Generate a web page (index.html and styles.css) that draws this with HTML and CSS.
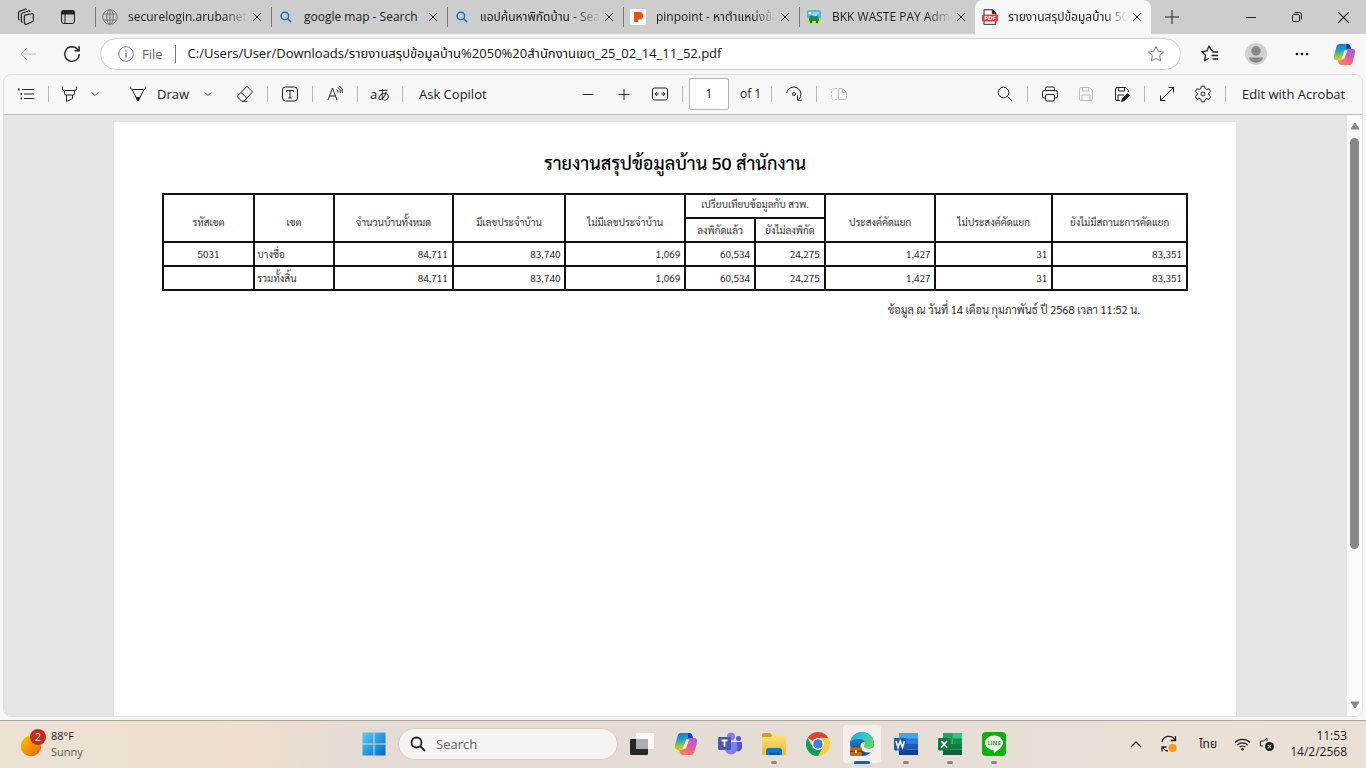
FILE: index.html
```html
<!DOCTYPE html>
<html lang="th">
<head>
<meta charset="utf-8">
<title>รายงานสรุปข้อมูลบ้าน 50 สำนักงานเขต</title>
<link rel="stylesheet" href="styles.css">
</head>
<body>
<svg class="defs" aria-hidden="true">
  <defs>
    <linearGradient id="cp-a" x1="0" y1="0" x2="0.2" y2="1"><stop offset="0" stop-color="#1a6fe0"/><stop offset=".45" stop-color="#1fa3c4"/><stop offset=".75" stop-color="#8cc63f"/><stop offset="1" stop-color="#f5c21b"/></linearGradient>
    <linearGradient id="cp-b" x1="0.8" y1="0" x2="0.2" y2="1"><stop offset="0" stop-color="#a55be8"/><stop offset=".5" stop-color="#ee5a9a"/><stop offset="1" stop-color="#fb8a3c"/></linearGradient>
    <linearGradient id="win" x1="0" y1="0" x2="1" y2="1"><stop offset="0" stop-color="#4fd0fb"/><stop offset="1" stop-color="#0567c8"/></linearGradient>
    <linearGradient id="sun" x1="0" y1="0" x2="1" y2="1"><stop offset="0" stop-color="#ffc800"/><stop offset="1" stop-color="#e85f00"/></linearGradient>
    <linearGradient id="folder" x1="0" y1="0" x2="0" y2="1"><stop offset="0" stop-color="#ffe07a"/><stop offset="1" stop-color="#f6b62a"/></linearGradient>
    <linearGradient id="edge-a" x1="0" y1="0" x2="1" y2=".6"><stop offset="0" stop-color="#2a9fe0"/><stop offset=".5" stop-color="#2fc3d0"/><stop offset="1" stop-color="#62d85a"/></linearGradient>
    <linearGradient id="edge-b" x1="0" y1="0" x2="0" y2="1"><stop offset="0" stop-color="#1b8fd8"/><stop offset="1" stop-color="#0c4f9e"/></linearGradient>
    <symbol id="copilot" viewBox="0 0 24 24">
      <path fill="url(#cp-a)" d="M7 1h8c2 0 2.800 1 3.300 2.800L19 6h-3c-1.600 0-2.300.8-2.800 2.200L10.500 16c-.6 1.600-1.500 2-3 2H4C1.500 18 .3 16.400 1 13.500L3.600 4C4.200 2 5.200 1 7 1z"/>
      <path fill="url(#cp-b)" d="M17 23H9c-2 0-2.800-1-3.300-2.800L5 18h3c1.600 0 2.300-.8 2.800-2.200L13.500 8c.6-1.600 1.500-2 3-2H20c2.500 0 3.700 1.600 3 4.500L20.400 20c-.6 2-1.600 3-3.400 3z"/>
      <path fill="#f7f7f7" d="M12.200 7.500h3l-3.300 9H8.700z"/>
      <path fill="#1b3fae" d="M14 1h1c2 0 2.800 1 3.300 2.800L19 6h-3c-1 0-1.700.3-2.200 1z"/>
    </symbol>
    <symbol id="x" viewBox="0 0 10 10"><path d="M1 1l8 8M9 1L1 9"/></symbol>
    <symbol id="chev" viewBox="0 0 10 10"><path d="M1 3l4 4 4-4"/></symbol>
    <symbol id="lens" viewBox="0 0 16 16"><circle cx="6.500" cy="6.500" r="5"/><path d="M10.200 10.200L15 15"/></symbol>
  </defs>
</svg>

<header class="tabstrip">
  <div class="strip-tools">
    <button class="strip-btn" aria-label="Workspaces"><svg width="18" height="18" viewBox="0 0 18 18" stroke-width="1.200"><path d="M8 7.200l6.500-1.600a1.500 1.500 0 0 1 1.900 1.500V12a2 2 0 0 1-1.400 1.900l-5.600 2.300a1.500 1.500 0 0 1-2.100-1.400V8.500z"/><path d="M5.500 14.500a1.500 1.500 0 0 1-1.100-1.500V6.500A1.800 1.800 0 0 1 5.600 5l5.900-2a1.500 1.500 0 0 1 1.700.8"/><path d="M2.500 12a1.500 1.500 0 0 1-1-1.400V5a1.800 1.800 0 0 1 1.100-1.600L8 1.300a1.500 1.500 0 0 1 1.600.4"/></svg></button>
    <button class="strip-btn" aria-label="Tab actions"><svg width="16" height="16" viewBox="0 0 16 16"><rect x="1.500" y="1.500" width="13" height="13" rx="2.500"/><path d="M1.500 3.500h13" stroke-width="4"/><path d="M5 5v9.500"/></svg></button>
  </div>
  <div class="tabs">
    <div class="tab"><svg class="fav gray" viewBox="0 0 16 16"><circle cx="8" cy="8" r="7.300"/><ellipse cx="8" cy="8" rx="3.300" ry="7.300"/><path d="M1.500 5h13M1.500 11h13M8 1v14"/></svg><span class="tab-title">securelogin.arubanetw</span><button class="close" aria-label="Close tab"><svg width="10" height="10"><use href="#x"/></svg></button></div>
    <div class="tab"><svg class="fav small" viewBox="0 0 16 16"><use href="#lens"/></svg><span class="tab-title whole">google map - Search</span><button class="close" aria-label="Close tab"><svg width="10" height="10"><use href="#x"/></svg></button></div>
    <div class="tab"><svg class="fav small" viewBox="0 0 16 16"><use href="#lens"/></svg><span class="tab-title">แอปค้นหาพิกัดบ้าน - Sea</span><button class="close" aria-label="Close tab"><svg width="10" height="10"><use href="#x"/></svg></button></div>
    <div class="tab"><svg class="fav" viewBox="0 0 16 16" stroke="none"><rect width="16" height="16" rx="2" fill="#fff"/><path fill="#ff4d0d" d="M4 3h5.500a3.700 3.700 0 0 1 0 7.400H8V13H4z"/></svg><span class="tab-title">pinpoint - หาตำแหน่งข้อ</span><button class="close" aria-label="Close tab"><svg width="10" height="10"><use href="#x"/></svg></button></div>
    <div class="tab"><svg class="fav" viewBox="0 0 16 16" stroke="none"><rect x="1" y="1" width="14" height="9" rx="2" fill="#51b5dd"/><circle cx="4" cy="4" r="1.500" fill="#fff"/><path d="M7 4h6M6 6h5" stroke="#d6f3ff"/><path fill="#d9e52f" d="M1 10c4-2 10-2 14 0v4H1z"/><path fill="#178b57" d="M3 9c1-3 4-3 5-1 2-2 5-1 5 2v2H3z"/><circle cx="5" cy="13" r="1.300" fill="#176b4b"/><circle cx="11" cy="13" r="1.300" fill="#176b4b"/></svg><span class="tab-title">BKK WASTE PAY Admi</span><button class="close" aria-label="Close tab"><svg width="10" height="10"><use href="#x"/></svg></button></div>
    <div class="tab active"><svg class="fav" viewBox="0 0 16 16"><path fill="#fff" d="M2 15.300V.8h8.500l3.300 3.400v11.100z"/><path fill="#111" d="M10.300.8v3.600h3.500z"/><rect x="0" y="5.500" width="16" height="7" rx="1.500" fill="#e9393c" stroke="none"/><text x="8" y="11" text-anchor="middle" class="pdf-mark">PDF</text></svg><span class="tab-title">รายงานสรุปข้อมูลบ้าน 50</span><button class="close" aria-label="Close tab"><svg width="10" height="10"><use href="#x"/></svg></button></div>
  </div>
  <button class="strip-btn" aria-label="New tab"><svg width="14" height="14" viewBox="0 0 14 14"><path d="M7 0v14M0 7h14"/></svg></button>
  <div class="win-controls">
    <button aria-label="Minimize"><svg width="10" height="10" viewBox="0 0 10 10"><path d="M0 5.500h10"/></svg></button>
    <button aria-label="Restore"><svg width="10" height="10" viewBox="0 0 10 10"><rect x=".5" y="2.500" width="7" height="7" rx="1.500"/><path d="M2.500.5h5a2 2 0 0 1 2 2v5"/></svg></button>
    <button aria-label="Close"><svg width="11" height="11" viewBox="0 0 10 10"><path d="M0 0l10 10M10 0L0 10"/></svg></button>
  </div>
</header>

<nav class="address-row">
  <button class="nav-btn" aria-label="Back" disabled><svg class="faint" width="17" height="14" viewBox="0 0 17 14"><path d="M16 7H1M7 1L1 7l6 6"/></svg></button>
  <button class="nav-btn" aria-label="Refresh"><svg width="18" height="18" viewBox="0 0 18 18" stroke-width="1.400"><path d="M16.300 9A7.300 7.300 0 1 1 14 3.700L16 5.500M16.200 1v4.700h-4.700"/></svg></button>
  <div class="omnibox">
    <svg class="gray" width="16" height="16" viewBox="0 0 16 16"><circle cx="8" cy="8" r="7.300"/><path d="M8 7v4.500M8 4.300v1.200" stroke-width="1.400"/></svg>
    <span class="scheme">File</span>
    <input class="url" type="text" aria-label="Address" value="C:/Users/User/Downloads/รายงานสรุปข้อมูลบ้าน%2050%20สำนักงานเขต_25_02_14_11_52.pdf">
    <button class="star" aria-label="Add to favorites"><svg class="gray" width="18" height="18" viewBox="0 0 18 18"><path d="M9 1.500l2.300 4.800 5.200.7-3.800 3.600.9 5.300L9 13.400l-4.600 2.500.9-5.300L1.500 7l5.200-.7z"/></svg></button>
  </div>
  <button class="side-btn" aria-label="Favorites"><svg width="18" height="18" viewBox="0 0 18 18" stroke-width="1.300"><path d="M12 5.800h-1L8 1.300 5.900 6l-5 .8 3.600 3.500-.8 5.200L8 13.200"/><path d="M11.500 7H17M10.500 10.500H17M11.500 14H17"/></svg></button>
  <button class="side-btn" aria-label="Profile"><svg width="22" height="22" viewBox="0 0 22 22" stroke="none"><circle cx="11" cy="11" r="11" fill="#d2d0ce"/><circle cx="11" cy="8" r="4.700" fill="#8a8886"/><path fill="#8a8886" d="M4 14.500h14c-.5 3-3.500 5-7 5s-6.500-2-7-5z"/></svg></button>
  <button class="side-btn" aria-label="Settings and more"><svg width="16" height="4" viewBox="0 0 16 4" stroke="none"><g fill="#111"><circle cx="3" cy="2" r="1.300"/><circle cx="8" cy="2" r="1.300"/><circle cx="13" cy="2" r="1.300"/></g></svg></button>
  <button class="side-btn last" aria-label="Copilot"><svg width="23" height="23"><use href="#copilot"/></svg></button>
</nav>

<main class="viewer">
  <div class="toolbar">
    <div class="group">
      <button class="tool" aria-label="Contents"><svg width="18" height="18" viewBox="0 0 18 18"><path d="M5 4.500h12M7 9h10M7 13.500h10"/><path d="M1 4.500h1.600M3.500 9h1.500M3.500 13.500h1.500" stroke-width="1.800"/></svg></button>
      <i class="sep"></i>
      <button class="tool narrow" aria-label="Highlight"><svg width="18" height="18" viewBox="0 0 18 18"><path d="M1.500 1.500v2.300a1.700 1.700 0 0 0 1.700 1.700h10.600a1.700 1.700 0 0 0 1.700-1.700V1.500M3.500 5.500v3.200a1.300 1.300 0 0 0 1.300 1.300h7.400a1.300 1.300 0 0 0 1.300-1.300V5.500M5.500 10v6.500l6-2.800V10"/></svg></button>
      <button class="more" aria-label="Highlight colors"><svg width="8" height="8"><use href="#chev"/></svg></button>
      <button class="draw"><svg width="18" height="18" viewBox="0 0 18 18"><path d="M1.500 1.500v1a2 2 0 0 0 2 2h11a2 2 0 0 0 2-2v-1M3 4.500L9 16l6-11.500"/><path d="M7 12.500h4L9 16z" fill="#222"/></svg>Draw</button>
      <button class="more" aria-label="Draw properties"><svg width="8" height="8"><use href="#chev"/></svg></button>
      <button class="tool erase" aria-label="Erase"><svg width="18" height="18" viewBox="0 0 18 18"><path d="M2 10.500l8-8.300c.5-.6 1.200-.6 1.800 0l4 3.800c.6.500.6 1.200 0 1.800l-7.800 8.500H5.800L2 12.500c-.6-.6-.6-1.400 0-2zM5.200 7.500l5.800 5.800M6 16.300h5.500"/></svg></button>
      <i class="sep"></i>
      <button class="tool" aria-label="Add text"><svg width="18" height="18" viewBox="0 0 18 18"><rect x="1.500" y="2" width="15" height="14" rx="3"/><path d="M5.500 7V5.500h7V7M9 5.500v7.500M7.300 13h3.400"/></svg></button>
      <i class="sep"></i>
      <button class="tool" aria-label="Read aloud"><svg width="18" height="18" viewBox="0 0 18 18"><path d="M2 15L6.500 3 11 15M3.500 11h6M10.500 4.500a3 3 0 0 1 1.500 3M12 2.500a5 5 0 0 1 2.300 5.500M13.500 1a7 7 0 0 1 3 7"/></svg></button>
      <i class="sep"></i>
      <button class="tool translate" aria-label="Translate">aあ</button>
      <i class="sep"></i>
      <button class="text-btn">Ask Copilot</button>
    </div>
    <div class="group">
      <button class="tool" aria-label="Zoom out"><svg width="12" height="12" viewBox="0 0 12 12"><path d="M1 6.500h10"/></svg></button>
      <button class="tool" aria-label="Zoom in"><svg width="12" height="12" viewBox="0 0 12 12"><path d="M.5 6.500h11M6 1v11"/></svg></button>
      <button class="tool" aria-label="Fit to width"><svg width="18" height="14" viewBox="0 0 18 14"><rect x="1.500" y="1" width="15" height="12" rx="2"/><path d="M4 7h4M10 7h4M6 5L4 7l2 2M12 5l2 2-2 2"/></svg></button>
      <i class="sep"></i>
      <input class="page-no" type="text" aria-label="Page number" value="1">
      <span class="of">of 1</span>
      <i class="sep"></i>
      <button class="tool" aria-label="Rotate"><svg width="18" height="18" viewBox="0 0 18 18"><path d="M1.500 8A7.300 7.300 0 1 1 14 14.300M12.500 10.500v4.700h4.300"/><circle cx="9" cy="9" r="1.500"/></svg></button>
      <i class="sep"></i>
      <button class="tool" aria-label="Page view" disabled><svg class="faint" width="18" height="16" viewBox="0 0 18 16"><path d="M7 2.500H3.500a2 2 0 0 0-2 2v7a2 2 0 0 0 2 2H7" stroke-dasharray="2 1.500"/><path d="M8.500 2.500h4l4 4v5a2 2 0 0 1-2 2h-6zM12.500 2.500v4h4"/></svg></button>
    </div>
    <div class="group">
      <button class="tool" aria-label="Find"><svg width="16" height="16" viewBox="0 0 16 16"><circle cx="6.500" cy="6.500" r="5.300"/><path d="M10.400 10.400L15 15"/></svg></button>
      <i class="sep"></i>
      <button class="tool" aria-label="Print"><svg width="18" height="16" viewBox="0 0 18 16"><path d="M4.500 4V2.500A1.500 1.500 0 0 1 6 1h6a1.500 1.500 0 0 1 1.500 1.500V4M4.500 12H3a1.500 1.500 0 0 1-1.500-1.500V6.500a2 2 0 0 1 2-2h11a2 2 0 0 1 2 2v4A1.500 1.500 0 0 1 15 12h-1.500"/><rect x="4.500" y="8.500" width="9" height="6.500" rx="1.500"/></svg></button>
      <button class="tool" aria-label="Save" disabled><svg class="faint" width="16" height="16" viewBox="0 0 16 16"><path d="M1.500 3A1.500 1.500 0 0 1 3 1.500h8.500l3 3V13a1.500 1.500 0 0 1-1.500 1.500H3A1.500 1.500 0 0 1 1.500 13zM4.500 1.500V5h6V1.500M4 14.500V9h8v5.500"/></svg></button>
      <button class="tool" aria-label="Save as"><svg width="16" height="16" viewBox="0 0 16 16"><path d="M6 14.500H3A1.500 1.500 0 0 1 1.500 13V3A1.500 1.500 0 0 1 3 1.500h8.500l3 3V6M4.500 1.500V5h6V1.500M4 14.500V9h6"/><path d="M7.500 15.500l1-3 5-5 2 2-5 5z" fill="#222"/></svg></button>
      <i class="sep"></i>
      <button class="tool" aria-label="Full screen"><svg width="16" height="16" viewBox="0 0 16 16"><path d="M1.500 14.500l13-13M9.500 1.500h5v5M1.500 9.500v5h5"/></svg></button>
      <button class="tool" aria-label="Settings"><svg width="18" height="18" viewBox="0 0 18 18"><path d="M7.400 1.200h3.200l.5 2.400 1.500.9 2.400-.8 1.600 2.800-1.900 1.600v1.800l1.900 1.600-1.600 2.800-2.400-.8-1.500.9-.5 2.400H7.400l-.5-2.400-1.500-.9-2.400.8-1.600-2.800 1.900-1.600V8.100L1.400 6.500 3 3.700l2.400.8 1.500-.9z" stroke-linejoin="round"/><circle cx="9" cy="9" r="2"/></svg></button>
      <i class="sep"></i>
      <button class="text-btn">Edit with Acrobat</button>
    </div>
  </div>

  <div class="canvas">
    <div class="pages">
      <article class="sheet">
        <h1>รายงานสรุปข้อมูลบ้าน 50 สำนักงาน</h1>
        <table>
          <colgroup><col class="w-code"><col class="w-area"><col class="w-all"><col class="w-has"><col class="w-no"><col class="w-pin"><col class="w-pin"><col class="w-want"><col class="w-dont"><col></colgroup>
          <thead>
            <tr><th rowspan="2">รหัสเขต</th><th rowspan="2">เขต</th><th rowspan="2">จำนวนบ้านทั้งหมด</th><th rowspan="2">มีเลขประจำบ้าน</th><th rowspan="2">ไม่มีเลขประจำบ้าน</th><th colspan="2" class="sub top">เปรียบเทียบข้อมูลกับ สวพ.</th><th rowspan="2">ประสงค์คัดแยก</th><th rowspan="2">ไม่ประสงค์คัดแยก</th><th rowspan="2">ยังไม่มีสถานะการคัดแยก</th></tr>
            <tr><th class="sub">ลงพิกัดแล้ว</th><th class="sub">ยังไม่ลงพิกัด</th></tr>
          </thead>
          <tbody>
            <tr><td class="code">5031</td><td class="name">บางซื่อ</td><td>84,711</td><td>83,740</td><td>1,069</td><td>60,534</td><td>24,275</td><td>1,427</td><td>31</td><td>83,351</td></tr>
            <tr><td></td><td class="name">รวมทั้งสิ้น</td><td>84,711</td><td>83,740</td><td>1,069</td><td>60,534</td><td>24,275</td><td>1,427</td><td>31</td><td>83,351</td></tr>
          </tbody>
        </table>
        <p class="stamp">ข้อมูล ณ วันที่ 14 เดือน กุมภาพันธ์ ปี 2568 เวลา 11:52 น.</p>
      </article>
    </div>
    <div class="scrollbar">
      <svg width="10" height="8" viewBox="0 0 10 8"><path d="M5 1L9 7H1z"/></svg>
      <div class="track"><div class="thumb"></div></div>
      <svg width="10" height="8" viewBox="0 0 10 8"><path d="M5 7L9 1H1z"/></svg>
    </div>
  </div>
</main>

<footer class="taskbar">
  <div class="weather">
    <svg width="30" height="32" viewBox="0 0 30 32" stroke="none"><circle cx="13" cy="18" r="10.300" fill="url(#sun)"/><circle cx="20" cy="9" r="8" fill="#c42b1c"/><text x="20" y="13" text-anchor="middle" class="badge">2</text></svg>
    <div><span>88°F</span><span class="muted">Sunny</span></div>
  </div>
  <div class="apps">
    <button class="app" aria-label="Start"><svg width="24" height="24" viewBox="0 0 24 24" stroke="none"><path fill="url(#win)" d="M.5.500H11.500v11H.5zM12.500.500h11v11h-11zM.5 12.500h11v11H.5zM12.500 12.500h11v11h-11z"/></svg></button>
    <label class="search"><svg width="16" height="16" stroke-width="1.800"><use href="#lens"/></svg><input type="text" placeholder="Search" aria-label="Search"></label>
    <button class="app" aria-label="Task view"><svg width="24" height="24" viewBox="0 0 24 24" stroke="none"><rect x="0" y="7" width="18" height="16" rx="1" fill="#262626"/><rect x="6" y="1" width="18" height="16" rx="1" fill="#fff" opacity=".85"/><rect x="6" y="7" width="12" height="10" fill="#adadad"/></svg></button>
    <button class="app" aria-label="Copilot"><svg width="24" height="24"><use href="#copilot"/></svg></button>
    <button class="app" aria-label="Teams"><svg width="24" height="24" viewBox="0 0 24 24" stroke="none"><circle cx="20.500" cy="6.500" r="2.500" fill="#5059c9"/><circle cx="13" cy="4.500" r="4" fill="#7b83eb"/><path fill="#5059c9" d="M17 10h7v6a4 4 0 0 1-7 2z"/><path fill="#7b83eb" d="M7 10h12v6.500a6 6 0 0 1-12 0z"/><rect x="0" y="5" width="13" height="13" rx="1.200" fill="#4b53bc"/><path d="M3.500 8.500h6M6.500 8.500v6.500" stroke="#fff" stroke-width="1.800"/></svg></button>
    <button class="app open" aria-label="File Explorer"><svg width="24" height="24" viewBox="0 0 24 24" stroke="none"><path fill="#d99a17" d="M0 2.500a1.500 1.500 0 0 1 1.500-1.500H8l2.500 2.500V7H0z"/><path fill="url(#folder)" d="M0 5h9l1.500-1.500h12A1.500 1.500 0 0 1 24 5v16.500a1.500 1.500 0 0 1-1.500 1.500h-21A1.500 1.500 0 0 1 0 21.500z"/><path fill="#1276c4" d="M4 23v-4.500A2.500 2.500 0 0 1 6.500 16h11a2.500 2.500 0 0 1 2.500 2.500V23z"/><path fill="#0b5a9d" d="M7 20.500h10V23H7z"/></svg></button>
    <button class="app" aria-label="Chrome"><svg width="24" height="24" viewBox="0 0 24 24" stroke="none"><path fill="#db4437" d="M12 12L1.600 6A12 12 0 0 1 22.400 6z"/><path fill="#ffcd40" d="M12 12V6h10.400A12 12 0 0 1 12 24l5.200-9z"/><path fill="#0f9d58" d="M12 12l5.200 3L12 24A12 12 0 0 1 1.600 6l5.200 9z"/><circle cx="12" cy="12" r="6" fill="#fff"/><circle cx="12" cy="12" r="4.700" fill="#3f7fee"/></svg></button>
    <button class="app open current" aria-label="Edge"><svg width="24" height="24" viewBox="0 0 24 24" stroke="none"><circle cx="12" cy="12" r="12" fill="url(#edge-b)"/><path fill="url(#edge-a)" d="M.2 10A12 12 0 0 1 24 11.500c0 3-2.500 5-5.500 5-3 0-4.500-1-4.500-2 0-1 1-1.300 1-3.200 0-2.500-2.500-4.300-6-4.300C5 7 1.500 8 .2 10z"/><path fill="#f4efea" d="M14.500 10c-2.600 0-4 2-4 4.200 0 4 4 6.300 7.500 6.300 2 0 3.500-.5 4.500-1.500l1.500-4.500c-1.500 1.500-3.500 2-5.500 2-3 0-4.500-1-4.500-2 0-1 1.300-1.500.5-4.500z"/><rect x="0" y="15.500" width="12" height="8.500" rx="1" fill="#c66b13"/><path fill="#7e3c06" d="M0 18.500h12V20H0z"/><path d="M4 15.500V14h4v1.500" fill="none" stroke="#7e3c06" stroke-width="1.200"/><rect x="5" y="18" width="2" height="3" fill="#ffd45b"/></svg></button>
    <button class="app open" aria-label="Word"><svg width="24" height="24" viewBox="0 0 24 24" stroke="none"><path fill="#41a5ee" d="M5 1h19v6H5z"/><path fill="#2b7cd3" d="M5 6.500h19V12H5z"/><path fill="#185abd" d="M5 12h19v5.500H5z"/><path fill="#103f91" d="M5 17.500h19V23H5z"/><rect x="0" y="6" width="12.500" height="12.500" rx="1" fill="#185abd"/><path d="M2 9l2 6.500L6.200 9l2.200 6.500 2-6.500" fill="none" stroke="#fff" stroke-width="1.600"/></svg></button>
    <button class="app open" aria-label="Excel"><svg width="24" height="24" viewBox="0 0 24 24" stroke="none"><path fill="#33c481" d="M5 1h19v6H5z"/><path fill="#21a366" d="M5 1h9.500v11H5z"/><path fill="#159353" d="M14.500 6.500H24V12h-9.500z"/><path fill="#107c41" d="M5 12h19v5.500H5z"/><path fill="#185c37" d="M5 17.500h19V23H5z"/><rect x="0" y="6" width="12.500" height="12.500" rx="1" fill="#107c41"/><path d="M3.300 9l5.700 6.500M9 9l-5.700 6.500" stroke="#fff" stroke-width="1.800"/></svg></button>
    <button class="app open" aria-label="LINE"><svg width="24" height="24" viewBox="0 0 24 24" stroke="none"><rect width="24" height="24" rx="4" fill="#05b405"/><path fill="#fff" d="M12 3.500c5 0 9 3.200 9 7.300 0 4-5.500 8-8.500 9.700-.8.400-.8-.5-.7-1.700 0-.4-.1-.6-.6-.7C6.300 17.500 3 14.500 3 10.800c0-4.100 4-7.300 9-7.300z"/><text x="12" y="13" text-anchor="middle" class="line-mark">LINE</text></svg></button>
  </div>
  <div class="tray">
    <button class="tray-btn" aria-label="Show hidden icons"><svg width="12" height="8" viewBox="0 0 12 8" stroke-width="1.300"><path d="M1 7l5-5 5 5"/></svg></button>
    <button class="tray-btn wide" aria-label="Updates"><svg width="18" height="18" viewBox="0 0 18 18" stroke-width="1.300"><path d="M2 7a7 7 0 0 1 13-2M15.500 1v4.500H11M8 16a7 7 0 0 1-5-3M2 16.500V12h4.500"/><circle cx="12.500" cy="13" r="4" fill="#f79a0b" stroke="none"/></svg></button>
    <button class="tray-btn lang">ไทย</button>
    <button class="tray-btn net" aria-label="Network and sound"><svg width="17" height="14" viewBox="0 0 17 14" stroke-width="1.200"><path d="M1 5.500a10.500 10.500 0 0 1 15 0M3.300 8a7.300 7.300 0 0 1 10.400 0M5.600 10.300a4.200 4.200 0 0 1 5.800 0"/><circle cx="8.500" cy="12.300" r="1.300" fill="#222" stroke="none"/></svg><svg width="16" height="16" viewBox="0 0 16 16"><path d="M8 5V2L4.500 5H1.500v5H4"/><circle cx="10.500" cy="10.500" r="4.500" fill="#222" stroke="none"/><path d="M8.800 8.800l3.400 3.400M12.200 8.800l-3.400 3.400" stroke="#fff"/></svg></button>
    <div class="clock"><span>11:53</span><span>14/2/2568</span></div>
  </div>
</footer>
</body>
</html>
```

FILE: styles.css
```css
* { box-sizing: border-box; }
body {
  margin: 0;
  height: 100vh;
  display: flex;
  flex-direction: column;
  overflow: hidden;
  background: #f7f7f7;
  color: #1b1b1b;
  font-family: "Open Sans", "Noto Sans Thai", "Loma", sans-serif;
  font-size: 12px;
}
button, input { font: inherit; color: inherit; }
button {
  border: 0;
  padding: 0;
  background: none;
  display: flex;
  align-items: center;
  justify-content: center;
  flex: none;
}
svg { fill: none; stroke: #222; flex: none; }
svg[stroke="none"] { stroke: none; }
svg.gray { stroke: #777; }
svg.faint { stroke: #bbb; }
.defs { position: absolute; width: 0; height: 0; }
#copilot path { stroke: none; }

/* Tab strip */
.tabstrip { display: flex; height: 34px; background: #cdcdcd; flex: none; }
.strip-tools { display: flex; width: 95px; padding-left: 5px; flex: none; }
.strip-btn { width: 42px; height: 34px; }
.tabs { display: flex; flex: 0 1 1056px; min-width: 0; }
.tab {
  flex: 1 1 0;
  min-width: 0;
  display: flex;
  align-items: center;
  padding: 0 5px 0 7px;
  background: linear-gradient(#777, #777) left center / 1px 20px no-repeat;
}
.tab.active { background: #f7f7f7; border-radius: 8px 8px 0 0; }
.fav { width: 16px; height: 16px; margin-right: 10px; }
.fav.small { width: 12px; height: 12px; margin: 0 12px 0 2px; stroke: #1c6cc0; stroke-width: 2; }
.tab-title {
  flex: 1;
  min-width: 0;
  overflow: hidden;
  white-space: nowrap;
  line-height: 24px;
  -webkit-mask-image: linear-gradient(to right, #000 80%, transparent);
  mask-image: linear-gradient(to right, #000 80%, transparent);
}
.tab-title.whole { -webkit-mask-image: none; mask-image: none; }
.close { width: 18px; height: 18px; }
.pdf-mark { fill: #fff; stroke: none; font-size: 6px; font-weight: 700; }
.win-controls { display: flex; margin-left: auto; }
.win-controls button { width: 46px; height: 34px; }

/* Address row */
.address-row { display: flex; align-items: center; height: 40px; padding: 0 2px 0 6px; flex: none; }
.nav-btn { width: 44px; height: 36px; }
.omnibox {
  flex: 1;
  display: flex;
  align-items: center;
  height: 32px;
  margin: 0 6px;
  padding: 0 15px 0 17px;
  border: 1px solid #cfcfcf;
  border-radius: 16px;
  background: #fff;
  font-size: 13px;
}
.scheme { margin-left: 8px; padding-right: 12px; border-right: 1px solid #777; color: #666; line-height: 18px; }
.url { flex: 1; min-width: 0; border: 0; padding: 0 0 0 12px; background: none; color: #111; height: 28px; }
.star { width: 18px; height: 28px; }
.side-btn { width: 46px; height: 36px; }
.side-btn.last { width: 39px; }

/* PDF viewer */
.viewer {
  flex: 1;
  min-height: 0;
  display: flex;
  flex-direction: column;
  margin: 0 3px 3px;
  border: 1px solid #dedede;
  border-radius: 8px;
  overflow: hidden;
}
.toolbar {
  display: grid;
  grid-template-columns: 566fr 417fr 375fr;
  align-items: center;
  height: 40px;
  padding-bottom: 2px;
  border-bottom: 1px solid #bdbdbd;
  flex: none;
  font-size: 13px;
}
.group { display: flex; align-items: center; white-space: nowrap; }
.group:first-child { padding-left: 4px; }
.tool { width: 36px; height: 32px; }
.narrow { width: 34px; }
.more { width: 16px; height: 32px; }
.draw { margin-left: 15px; width: 82px; height: 32px; gap: 10px; }
.erase { margin-left: 11px; }
.sep { width: 1px; height: 16px; margin: 0 4px; background: #b8b8b8; flex: none; }
.translate { font-family: "Open Sans", "Noto Sans CJK JP", sans-serif; }
.text-btn { padding: 0 12px; height: 32px; }
.page-no { width: 40px; height: 32px; margin: 0 11px 0 2px; padding: 0; border: 1px solid #b5b5b5; border-radius: 2px; background: #fff; text-align: center; font-size: 12px; }
.of { font-size: 12px; margin-right: 6px; }

.canvas { flex: 1; min-height: 0; display: flex; background: #e5e5e5; }
.pages { flex: 1; min-width: 0; overflow: hidden; padding: 7px 111px 0 110px; }
.sheet {
  min-height: 100%;
  padding: 24px 48px;
  background: #fff;
  color: #333;
  font-family: "Sarabun", "TH Sarabun New", "Noto Sans Thai", "Noto Sans", sans-serif;
  font-size: 10px;
}
h1 { margin: 0 0 13px; font-size: 18px; line-height: 34px; font-weight: 500; text-align: center; color: #000; }
table { width: 100%; border-collapse: collapse; table-layout: fixed; }
th, td { border: 2px solid #111; height: 24px; padding: 0 4px; line-height: 14px; font-weight: 400; white-space: nowrap; }
th { padding-top: 8px; text-align: center; }
th.sub { padding: 0; }
th.top { padding-bottom: 4px; }
td { text-align: right; }
td.code { text-align: center; }
td.name { text-align: left; padding: 0 2px; }
.w-code { width: 8.900%; }
.w-area { width: 7.800%; }
.w-all { width: 11.600%; }
.w-has { width: 11%; }
.w-no { width: 11.700%; }
.w-pin { width: 6.820%; }
.w-want { width: 10.800%; }
.w-dont { width: 11.400%; }
.stamp { margin: 10px 48px 0 0; text-align: right; font-size: 11px; line-height: 18px; }

.scrollbar { width: 15px; display: flex; flex-direction: column; align-items: center; padding: 7px 0; background: #fafafa; flex: none; }
.scrollbar svg { fill: #888; stroke: #888; stroke-linejoin: round; }
.track { flex: 1; width: 9px; padding: 8px 0; }
.thumb { height: 74%; border-radius: 5px; background: #888; }

/* Taskbar */
.taskbar {
  display: grid;
  grid-template-columns: 1fr auto 1fr;
  align-items: center;
  height: 48px;
  padding: 0 0 2px 2px;
  border-top: 1px solid #aaa59e;
  background: linear-gradient(to right, #ebe2d3, #eedfd0 18%, #e3dbd4 28%, #e6ddd5 60%, #eae1d6);
  flex: none;
}
.weather { display: flex; align-items: center; gap: 3px; padding-left: 16px; }
.weather span, .clock span { display: block; line-height: 16px; }
.weather span { font-size: 11px; }
.weather .muted { color: #5c5852; }
.badge { fill: #fff; font-size: 11px; }
.line-mark { fill: #05b405; font-size: 6px; font-weight: 700; }
.apps { display: flex; align-items: center; }
.app { position: relative; width: 44px; height: 44px; }
.app.open::after { content: ""; position: absolute; bottom: 2px; width: 6px; height: 3px; border-radius: 2px; background: #8a8580; }
.app.current::before { content: ""; position: absolute; inset: 3px; border-radius: 4px; background: #f4efea; }
.app.current svg { position: relative; }
.app.current::after { width: 16px; background: #0067c0; }
.search {
  display: flex;
  align-items: center;
  gap: 10px;
  width: 220px;
  height: 32px;
  margin: 0 2px;
  padding: 0 11px;
  border: 1px solid #d6cec6;
  border-radius: 16px;
  background: #f6f4f1;
  font-size: 13px;
}
.search input { flex: 1; min-width: 0; border: 0; padding: 0; background: none; }
.search input::placeholder { color: #5f5c58; opacity: 1; }
.tray { display: flex; align-items: center; justify-content: flex-end; padding-right: 19px; }
.tray-btn { width: 30px; height: 40px; }
.tray-btn.wide { width: 36px; }
.tray-btn.lang { width: 42px; }
.tray-btn.net { width: 50px; gap: 8px; margin-right: 6px; }
.clock { width: 62px; text-align: right; }
```
